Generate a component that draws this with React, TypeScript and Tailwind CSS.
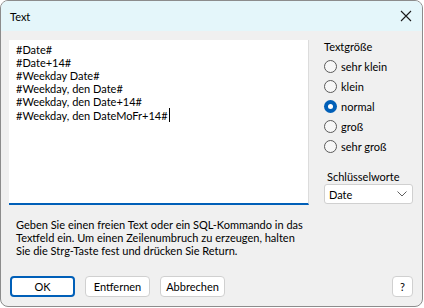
import { useState } from "react";

const sizes = ["sehr klein", "klein", "normal", "groß", "sehr groß"];

const lines = [
  "#Date#",
  "#Date+14#",
  "#Weekday Date#",
  "#Weekday, den Date#",
  "#Weekday, den Date+14#",
  "#Weekday, den DateMoFr+14#",
];

function Radio({ label, checked, onClick }: { label: string; checked: boolean; onClick: () => void }) {
  return (
    <button type="button" onClick={onClick} className="flex h-5 items-center gap-[4px]">
      {checked ? (
        <span className="flex size-[13px] items-center justify-center rounded-full bg-[#005fb8]">
          <span className="size-[5px] rounded-full bg-white" />
        </span>
      ) : (
        <span className="size-[13px] rounded-full border border-[#5a5a5a] bg-[#f7f7f7]" />
      )}
      <span>{label}</span>
    </button>
  );
}

export default function App() {
  const [size, setSize] = useState("normal");

  return (
    <div className="h-[308px] w-[424px] bg-white font-['Segoe_UI',Lato,sans-serif] text-[11px] leading-[13px] text-black">
      <div className="flex h-[307px] w-[423px] flex-col overflow-hidden rounded-[8px] border border-[#8c8c8c] bg-[#f0f0f0]">
        <div className="flex h-[30px] shrink-0 items-center justify-between bg-[#e4f6fa] pl-[9px] pr-[9px]">
          <span>Text</span>
          <svg width="12" height="12" viewBox="0 0 12 12" className="mr-[1px]">
            <path d="M1 1L11 11M11 1L1 11" stroke="#1a1a1a" strokeWidth="1.1" />
          </svg>
        </div>

        <div className="flex items-start pl-[8px] pt-[9px]">
          <div className="h-[165px] w-[300px] border-b-2 border-r border-b-[#005fb8] border-r-[#dcdcdc] bg-white px-[7px] pt-[3px]">
            {lines.map((l, i) => (
              <div key={i} className="flex items-center">
                {l}
                {i === lines.length - 1 && <span className="ml-[1px] inline-block h-[14px] w-px bg-black" />}
              </div>
            ))}
          </div>

          <div className="ml-[15px] flex flex-col">
            <div className="mb-[3px]">Textgröße</div>
            <div className="flex flex-col items-start">
              {sizes.map((s) => (
                <Radio key={s} label={s} checked={size === s} onClick={() => setSize(s)} />
              ))}
            </div>
            <div className="mt-[14px] pl-[3px]">Schlüsselworte</div>
            <div className="mt-[1px] flex h-[20px] w-[89px] items-center justify-between rounded-[3px] border border-[#d0d0d0] bg-white pl-[4px] pr-[5px]">
              <span>Date</span>
              <svg width="10" height="6" viewBox="0 0 10 6">
                <path d="M0.5 0.5L5 5L9.5 0.5" stroke="#606060" fill="none" strokeWidth="1" />
              </svg>
            </div>
          </div>
        </div>

        <p className="ml-[15px] mt-[13px] whitespace-nowrap">
          Geben Sie einen freien Text oder ein SQL-Kommando in das
          <br />
          Textfeld ein. Um einen Zeilenumbruch zu erzeugen, halten
          <br />
          Sie die Strg-Taste fest und drücken Sie Return.
        </p>

        <div className="mt-auto mb-[9px] flex items-center px-[9px]">
          <button className="h-[21px] w-[65px] rounded-[4px] border-2 border-[#005fb8] bg-white">OK</button>
          <button className="ml-[10px] h-[21px] w-[65px] rounded-[4px] border border-[#d0d0d0] bg-white">Entfernen</button>
          <button className="ml-[10px] h-[21px] w-[65px] rounded-[4px] border border-[#d0d0d0] bg-white">Abbrechen</button>
          <button className="ml-auto h-[21px] w-[21px] rounded-[4px] border border-[#d0d0d0] bg-white">?</button>
        </div>
      </div>
    </div>
  );
}
